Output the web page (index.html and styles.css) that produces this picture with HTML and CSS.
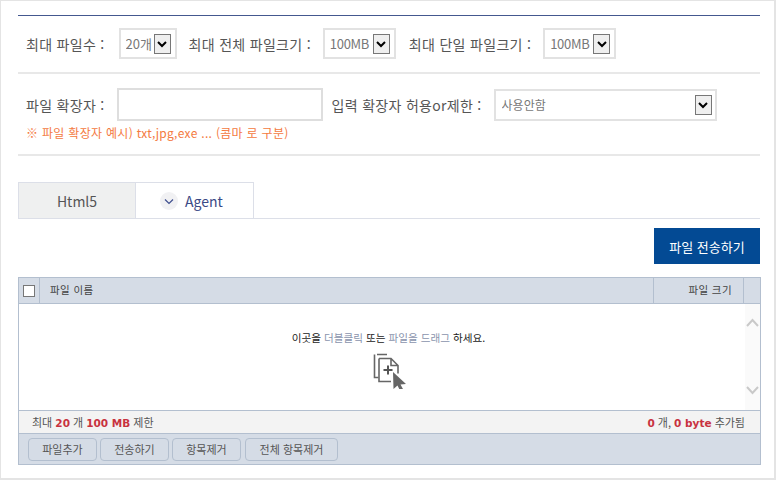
FILE: index.html
```html
<!DOCTYPE html>
<html lang="ko">
<head>
<meta charset="utf-8">
<title>파일 전송</title>
<link rel="stylesheet" href="styles.css">
</head>
<body>
<main class="frame">
  <section class="row row-limits">
    <span class="label">최대 파일수 :</span>
    <div class="select sel-count"><span>20개</span><i class="arrow"><svg width="14" height="14" viewBox="0 0 14 14"><path d="M3 5l4 4 4-4" fill="none" stroke="#000" stroke-width="2"/></svg></i></div>
    <span class="label label-b">최대 전체 파일크기 :</span>
    <div class="select sel-size"><span>100MB</span><i class="arrow"><svg width="14" height="14" viewBox="0 0 14 14"><path d="M3 5l4 4 4-4" fill="none" stroke="#000" stroke-width="2"/></svg></i></div>
    <span class="label label-c">최대 단일 파일크기 :</span>
    <div class="select sel-size"><span>100MB</span><i class="arrow"><svg width="14" height="14" viewBox="0 0 14 14"><path d="M3 5l4 4 4-4" fill="none" stroke="#000" stroke-width="2"/></svg></i></div>
  </section>
  <section class="row-ext">
    <div class="ext-line">
      <span class="label">파일 확장자 :</span>
      <div class="input"></div>
      <span class="label label-d">입력 확장자 허용or제한 :</span>
      <div class="select sel-wide"><span>사용안함</span><i class="arrow"><svg width="14" height="14" viewBox="0 0 14 14"><path d="M3 5l4 4 4-4" fill="none" stroke="#000" stroke-width="2"/></svg></i></div>
    </div>
    <p class="hint">※ 파일 확장자 예시) txt,jpg,exe ... (콤마 로 구분)</p>
  </section>
  <nav class="tabs">
    <div class="tab tab-off">Html5</div>
    <div class="tab tab-on">
      <span class="check"><svg width="10" height="8" viewBox="0 0 10 8"><path d="M1 2.500l4 4 4-4" fill="none" stroke="#3f4f8f" stroke-width="1.2"/></svg></span>
      <span>Agent</span>
    </div>
  </nav>
  <div class="send-row"><button class="send" type="button">파일 전송하기</button></div>
  <section class="uploader">
    <header class="head">
      <div class="head-check"><span class="box"></span></div>
      <div class="head-name">파일 이름</div>
      <div class="head-size">파일 크기</div>
      <div class="head-end"></div>
    </header>
    <div class="body">
      <div class="drop">
        <p class="drop-text">이곳을 <em>더블클릭</em> 또는 <em>파일을 드래그</em> 하세요.</p>
        <svg class="drop-icon" width="34" height="36" viewBox="0 0 34 36">
          <path d="M4 1.500h10M1.500 1.500v23h4" fill="none" stroke="#666" stroke-width="1.600"/>
          <path d="M6 5.500h12l7 7v8M25 12.500h-7v-7M6 5.500v23h12" fill="none" stroke="#666" stroke-width="1.600"/>
          <path d="M15 12.500v9M10.500 17h9" fill="none" stroke="#555" stroke-width="2"/>
          <path d="M20 19l13 12-5.500 .5 3 5.500-3 1.500-3-6-4 3.500z" fill="#666"/>
        </svg>
      </div>
      <div class="scroll">
        <svg width="13" height="9" viewBox="0 0 13 9"><path d="M1 8l5.500-6 5.500 6" fill="none" stroke="#c9c9c9" stroke-width="2"/></svg>
        <svg width="13" height="9" viewBox="0 0 13 9"><path d="M1 1l5.500 6 5.500-6" fill="none" stroke="#c9c9c9" stroke-width="2"/></svg>
      </div>
    </div>
    <div class="status">
      <span>최대 <b>20</b> 개 <b>100 MB</b> 제한</span>
      <span><b>0</b> 개, <b>0 byte</b> 추가됨</span>
    </div>
    <div class="tools">
      <button type="button" class="tool">파일추가</button>
      <button type="button" class="tool">전송하기</button>
      <button type="button" class="tool">항목제거</button>
      <button type="button" class="tool">전체 항목제거</button>
    </div>
  </section>
</main>
</body>
</html>
```
FILE: styles.css
```css
* { box-sizing: border-box; }
html, body { margin: 0; padding: 0; }
body {
  width: 776px;
  height: 480px;
  overflow: hidden;
  background: #fff;
  font-family: "Noto Sans CJK KR", "Noto Sans", sans-serif;
}
.frame {
  width: 776px;
  height: 480px;
  border: 1px solid #e4e4e4;
  border-width: 1px 2px 2px 1px;
  padding: 14px 14px 0 17px;
  display: flex;
  flex-direction: column;
}
.row, .row-ext { color: #555; font-size: 14px; }
.row {
  height: 59px;
  flex: none;
  border-top: 1px solid #44588f;
  border-bottom: 2px solid #e8e8e8;
  display: flex;
  align-items: center;
  padding: 0 0 1px 8px;
}
.label { white-space: nowrap; line-height: 20px; letter-spacing: .3px; }
.label-b { margin-left: 12px; }
.label-c { margin-left: 13px; }
.label-d { margin-left: 9px; }
.select {
  border: 2px solid #e2e2e2;
  background: #fff;
  color: #777;
  font-size: 13px;
  display: flex;
  align-items: center;
  height: 31px;
  padding: 0 4px 0 5px;
}
.select span { flex: 1; white-space: nowrap; overflow: hidden; }
.arrow {
  width: 17px;
  height: 20px;
  flex: none;
  background: #efefef;
  border: 1px solid #777;
  display: flex;
  align-items: center;
  justify-content: center;
}
.sel-count { width: 58px; margin-left: 14px; }
.sel-size { width: 73px; margin-left: 12px; }
.sel-size span { letter-spacing: -.3px; }
.row-ext {
  height: 82px;
  flex: none;
  border-bottom: 2px solid #e8e8e8;
  padding: 14px 0 0 8px;
}
.ext-line { display: flex; align-items: center; height: 33px; }
.input {
  width: 206px;
  height: 33px;
  margin-left: 12px;
  border: 2px solid #dedede;
  background: #fff;
}
.sel-wide {
  width: 223px;
  height: 32px;
  margin-left: 12px;
  padding-left: 6px;
  padding-right: 3px;
  font-size: 12px;
}
.hint {
  margin: 2px 0 0 0;
  font-size: 12px;
  line-height: 20px;
  letter-spacing: .3px;
  color: #f47a3f;
}
.tabs {
  margin-top: 26px;
  height: 37px;
  flex: none;
  display: flex;
  border-bottom: 1px solid #dcdfe8;
}
.tab {
  width: 118px;
  height: 37px;
  border: 1px solid #dcdfe8;
  font-size: 14px;
  display: flex;
  align-items: center;
  justify-content: center;
  gap: 7px;
}
.tab-off { background: #eff0f0; color: #555; }
.tab-on { background: #fff; color: #3b4a86; margin-left: -1px; width: 119px; padding-right: 6px; }
.check {
  width: 18px;
  height: 18px;
  border-radius: 50%;
  background: #f1f1f3;
  display: flex;
  align-items: center;
  justify-content: center;
}
.send-row { display: flex; justify-content: flex-end; margin-top: 9px; flex: none; }
.send {
  width: 106px;
  height: 36px;
  border: 0;
  padding: 0;
  background: #034a94;
  color: #fff;
  font: 13px "Noto Sans CJK KR", sans-serif;
}
.uploader {
  margin-top: 13px;
  width: 743px;
  height: 188px;
  flex: none;
  border: 1px solid #b3bfcf;
  display: flex;
  flex-direction: column;
}
.head {
  height: 26px;
  flex: none;
  background: #d5dce6;
  border-bottom: 1px solid #b3bfcf;
  display: flex;
  font-size: 10.5px;
  letter-spacing: .4px;
  color: #444;
  line-height: 24px;
}
.head > div { border-right: 1px solid #b3bfcf; }
.head-check {
  width: 21px;
  display: flex;
  align-items: center;
  justify-content: center;
}
.box {
  width: 12px;
  height: 12px;
  background: #fff;
  border: 1px solid #777;
}
.head-name { flex: 1; padding-left: 10px; }
.head-size { width: 90px; padding-right: 11px; text-align: right; }
.head-end { width: 16px; border-right: 0 !important; }
.body { flex: 1; display: flex; min-height: 0; }
.drop {
  flex: 1;
  display: flex;
  flex-direction: column;
  align-items: center;
  padding: 26px 0 0 13px;
}
.drop-text {
  margin: 0;
  font-size: 10.6px;
  line-height: 16px;
  color: #222;
}
.drop-text em { font-style: normal; color: #8a94ad; }
.drop-icon { margin-top: 7px; margin-left: 2px; flex: none; }
.scroll {
  width: 15px;
  background: #fafafa;
  display: flex;
  flex-direction: column;
  justify-content: space-between;
  align-items: center;
  padding: 14px 0 15px;
}
.status {
  height: 24px;
  flex: none;
  background: #f3f3f3;
  border-top: 1px solid #b3bfcf;
  border-bottom: 1px solid #b3bfcf;
  display: flex;
  justify-content: space-between;
  align-items: center;
  padding: 0 15px 0 13px;
  font-size: 11px;
  color: #555;
}
.status b { color: #c8323f; font-family: "DejaVu Sans", "Noto Sans CJK KR", sans-serif; font-size: 10.5px; }
.tools {
  height: 30px;
  flex: none;
  background: #d5dce6;
  display: flex;
  align-items: center;
  gap: 3px;
  padding: 0 9px;
}
.tool {
  height: 23px;
  padding: 0;
  width: 69px;
  background: #d5dce6;
  border: 1px solid #b3bfcf;
  border-radius: 4px;
  font: 11px "Noto Sans CJK KR", sans-serif;
  color: #555;
}
.tool:last-child { width: 93px; margin-left: 1px; }
```
